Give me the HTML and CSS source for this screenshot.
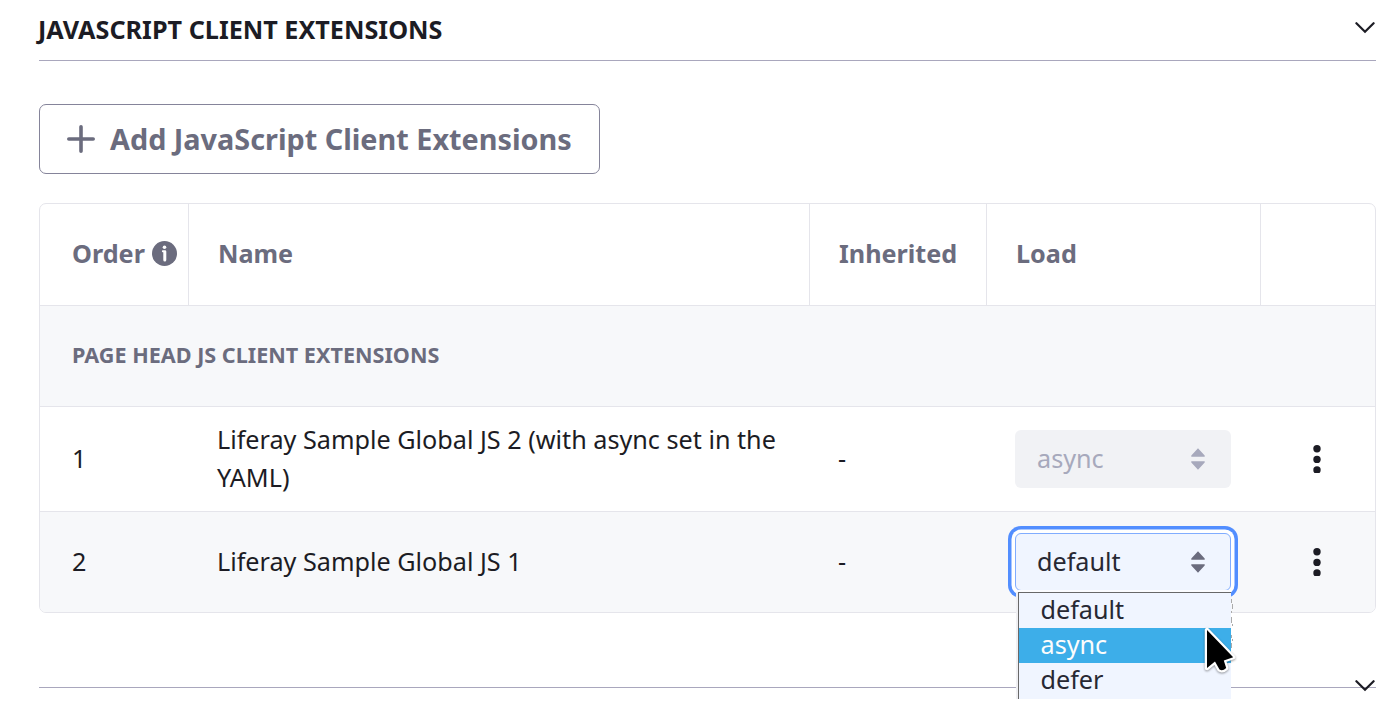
FILE: index.html
```html
<!DOCTYPE html>
<html lang="en">
<head>
<meta charset="utf-8">
<title>JavaScript Client Extensions</title>
<link rel="stylesheet" href="styles.css">
</head>
<body>
<main class="page">
  <header class="section-header">
    <h2 class="section-title"><span>JAVASCRIPT CLIENT EXTENSIONS</span></h2>
    <svg class="chevron" width="20" height="12" viewBox="0 0 20 12"><path d="M1.4 1.2 10 9.8 18.6 1.2"/></svg>
  </header>

  <button class="add-button">
    <svg width="28" height="28" viewBox="0 0 28 28"><path d="M14 1.8V26.2M1.8 14H26.2"/></svg>
    <span>Add JavaScript Client Extensions</span>
  </button>

  <section class="table">
    <div class="row row-head">
      <div class="cell"><span>Order</span>
        <svg class="info" width="25" height="25" viewBox="0 0 25 25"><circle class="disc" cx="12.5" cy="12.5" r="12.5"/><circle class="mark" cx="12.5" cy="6.2" r="1.8"/><path class="mark" d="M10.8 9.3h2.2q1.3 0 1.3 1.3v8.5q0 1.5-1.5 1.5t-1.5-1.5v-7.9h-.5q-.9 0-.9-.9t.9-1z"/></svg>
      </div>
      <div class="cell"><span>Name</span></div>
      <div class="cell"><span>Inherited</span></div>
      <div class="cell"><span>Load</span></div>
      <div class="cell"></div>
    </div>
    <div class="group"><span>PAGE HEAD JS CLIENT EXTENSIONS</span></div>
    <div class="row row-first">
      <div class="cell"><span>1</span></div>
      <div class="cell"><span>Liferay Sample Global JS 2 (with async set in the YAML)</span></div>
      <div class="cell"><span>-</span></div>
      <div class="cell"><div class="select disabled"><span>async</span><svg width="14" height="22" viewBox="0 0 14 22"><path d="M.3 8.7V7.4L7 .3l6.7 7.1v1.3zM.3 13.3v1.3L7 21.7l6.7-7.1v-1.3z"/></svg></div></div>
      <div class="cell"><svg class="dots" width="8" height="28" viewBox="0 0 8 28"><circle cx="4" cy="3.8" r="3.7"/><circle cx="4" cy="14.4" r="3.7"/><circle cx="4" cy="25" r="3.7"/></svg></div>
    </div>
    <div class="row row-second">
      <div class="cell"><span>2</span></div>
      <div class="cell"><span>Liferay Sample Global JS 1</span></div>
      <div class="cell"><span>-</span></div>
      <div class="cell"><div class="select focused"><span>default</span><svg width="14" height="22" viewBox="0 0 14 22"><path d="M.3 8.7V7.4L7 .3l6.7 7.1v1.3zM.3 13.3v1.3L7 21.7l6.7-7.1v-1.3z"/></svg>
        <div class="menu">
          <div class="option"><span>default</span></div>
          <div class="option active"><span>async</span></div>
          <div class="option"><span>defer</span></div>
          <svg class="menu-edge" width="3" height="56" viewBox="0 0 3 56"><path d="M.5 4v4M1.5 9v5M.5 16v2M.5 22v6M1.5 29v2M.5 40v3M1.5 44v2M.5 48v5"/></svg>
          <svg class="cursor" width="36" height="52" viewBox="0 0 36 52"><path d="M5 4V42L13 35.5 17.5 43.5Q20.5 45.5 24.2 42L21.8 34.5 31.2 31.2Z"/></svg>
        </div>
      </div></div>
      <div class="cell"><svg class="dots" width="8" height="28" viewBox="0 0 8 28"><circle cx="4" cy="3.8" r="3.7"/><circle cx="4" cy="14.4" r="3.7"/><circle cx="4" cy="25" r="3.7"/></svg></div>
    </div>
  </section>

  <footer class="section-footer">
    <svg class="chevron" width="20" height="12" viewBox="0 0 20 12"><path d="M1.4 1.2 10 9.8 18.6 1.2"/></svg>
  </footer>
</main>
</body>
</html>
```
FILE: styles.css
```css
* { box-sizing: border-box; }
body {
  margin: 0;
  background: #fff;
  color: #1c1c24;
  font: 25.2px/38px "Noto Sans", sans-serif;
  overflow: hidden;
}
svg { display: block; flex: none; }
.page { width: 1399px; height: 712px; padding: 0 23px 0 39px; overflow: hidden; }
.section-header {
  display: flex;
  align-items: center;
  justify-content: space-between;
  height: 61px;
  border-bottom: 1px solid #a9a7bd;
}
.section-title { margin: 0 0 2px -1px; font-size: 25.2px; font-weight: 700; }
.section-header .chevron { margin: -4px 1.5px 0 0; }
.chevron path { fill: none; stroke: #1c1c24; stroke-width: 2.2; stroke-linecap: round; stroke-linejoin: miter; }
.add-button {
  display: flex;
  align-items: center;
  gap: 15px;
  width: 561px;
  height: 70px;
  margin: 43px 0 29px;
  padding: 0 27px;
  border: 1px solid #85849a;
  border-radius: 7px;
  background: #fff;
  color: #6b6c7e;
  font: 700 28.8px/40px "Noto Sans", sans-serif;
  white-space: nowrap;
}
.add-button path { stroke: #6b6c7e; stroke-width: 3.6; stroke-linecap: round; }
.table {
  width: 1337px;
  height: 410px;
  border: 1px solid #e5e5eb;
  border-radius: 7px;
}
.row { display: grid; grid-template-columns: 149px 621px 177px 274px 114px; }
.cell { display: flex; align-items: center; padding-left: 28px; }
.cell > span { margin-bottom: 2px; }
.cell:first-child { padding-left: 32px; }
.cell:last-child { justify-content: center; padding: 0 2px 0 0; }
.row-head { height: 102px; border-bottom: 1px solid #e5e5eb; color: #6b6c7e; font-size: 25.2px; font-weight: 700; }
.row-head .cell { border-right: 1px solid #e5e5eb; padding-left: 29px; padding-bottom: 2px; }
.row-head .cell:first-child { padding-left: 32px; gap: 7px; }
.row-head .cell:last-child { border-right: 0; }
.disc { fill: #6b6c7e; }
.mark { fill: #fff; }
.group {
  display: flex;
  align-items: center;
  height: 101px;
  padding: 0 32px 2px;
  border-bottom: 1px solid #e5e5eb;
  background: #f7f8fa;
  color: #6b6c7e;
  font-size: 21.6px;
  font-weight: 700;
}
.row-first { height: 105px; border-bottom: 1px solid #e5e5eb; }
.row-second { height: 100px; background: #f7f8fa; border-radius: 0 0 6px 6px; }
.select {
  position: relative;
  display: flex;
  align-items: center;
  justify-content: space-between;
  width: 216px;
  height: 58px;
  padding: 0 26px 0 22px;
  border-radius: 6px;
}
.select > span { margin-bottom: 2px; }
.disabled { background: #f1f2f5; color: #a7a9bc; }
.disabled path { fill: #a7a9bc; }
.focused {
  z-index: 1;
  background: #f0f5ff;
  color: #272833;
  border: 1px solid #80acff;
  padding: 0 25px 0 21px;
  box-shadow: 0 0 0 3.5px #fff, 0 0 0 7px #528eff;
}
.focused > svg path { fill: #6b6c7e; }
.dots { fill: #1c1c24; }
.menu {
  position: absolute;
  left: 2px;
  top: 58px;
  width: 213px;
  height: 107px;
  border: solid #686868;
  border-width: 1px 0 0 1px;
  background: #f0f5ff;
  box-shadow: -2px 0 0 #f0f0f3, -1px -2px 0 #fbfcff;
}
.option { height: 35px; padding-left: 21.5px; line-height: 33px; }
.active { background: #3daee9; color: #fcfcfc; }
.menu-edge { position: absolute; left: 212px; top: 2px; fill: none; stroke: #aaa; stroke-width: 1; }
.cursor {
  position: absolute;
  left: 183px;
  top: 33px;
  fill: #000;
  stroke: #fff;
  stroke-width: 4.5;
  stroke-linejoin: round;
  paint-order: stroke;
  filter: drop-shadow(0 1px 1px #0006);
}
.section-footer { position: relative; height: 75px; border-bottom: 1px solid #a9a7bd; }
.section-footer .chevron { position: absolute; right: 1.5px; bottom: -5px; }
```
